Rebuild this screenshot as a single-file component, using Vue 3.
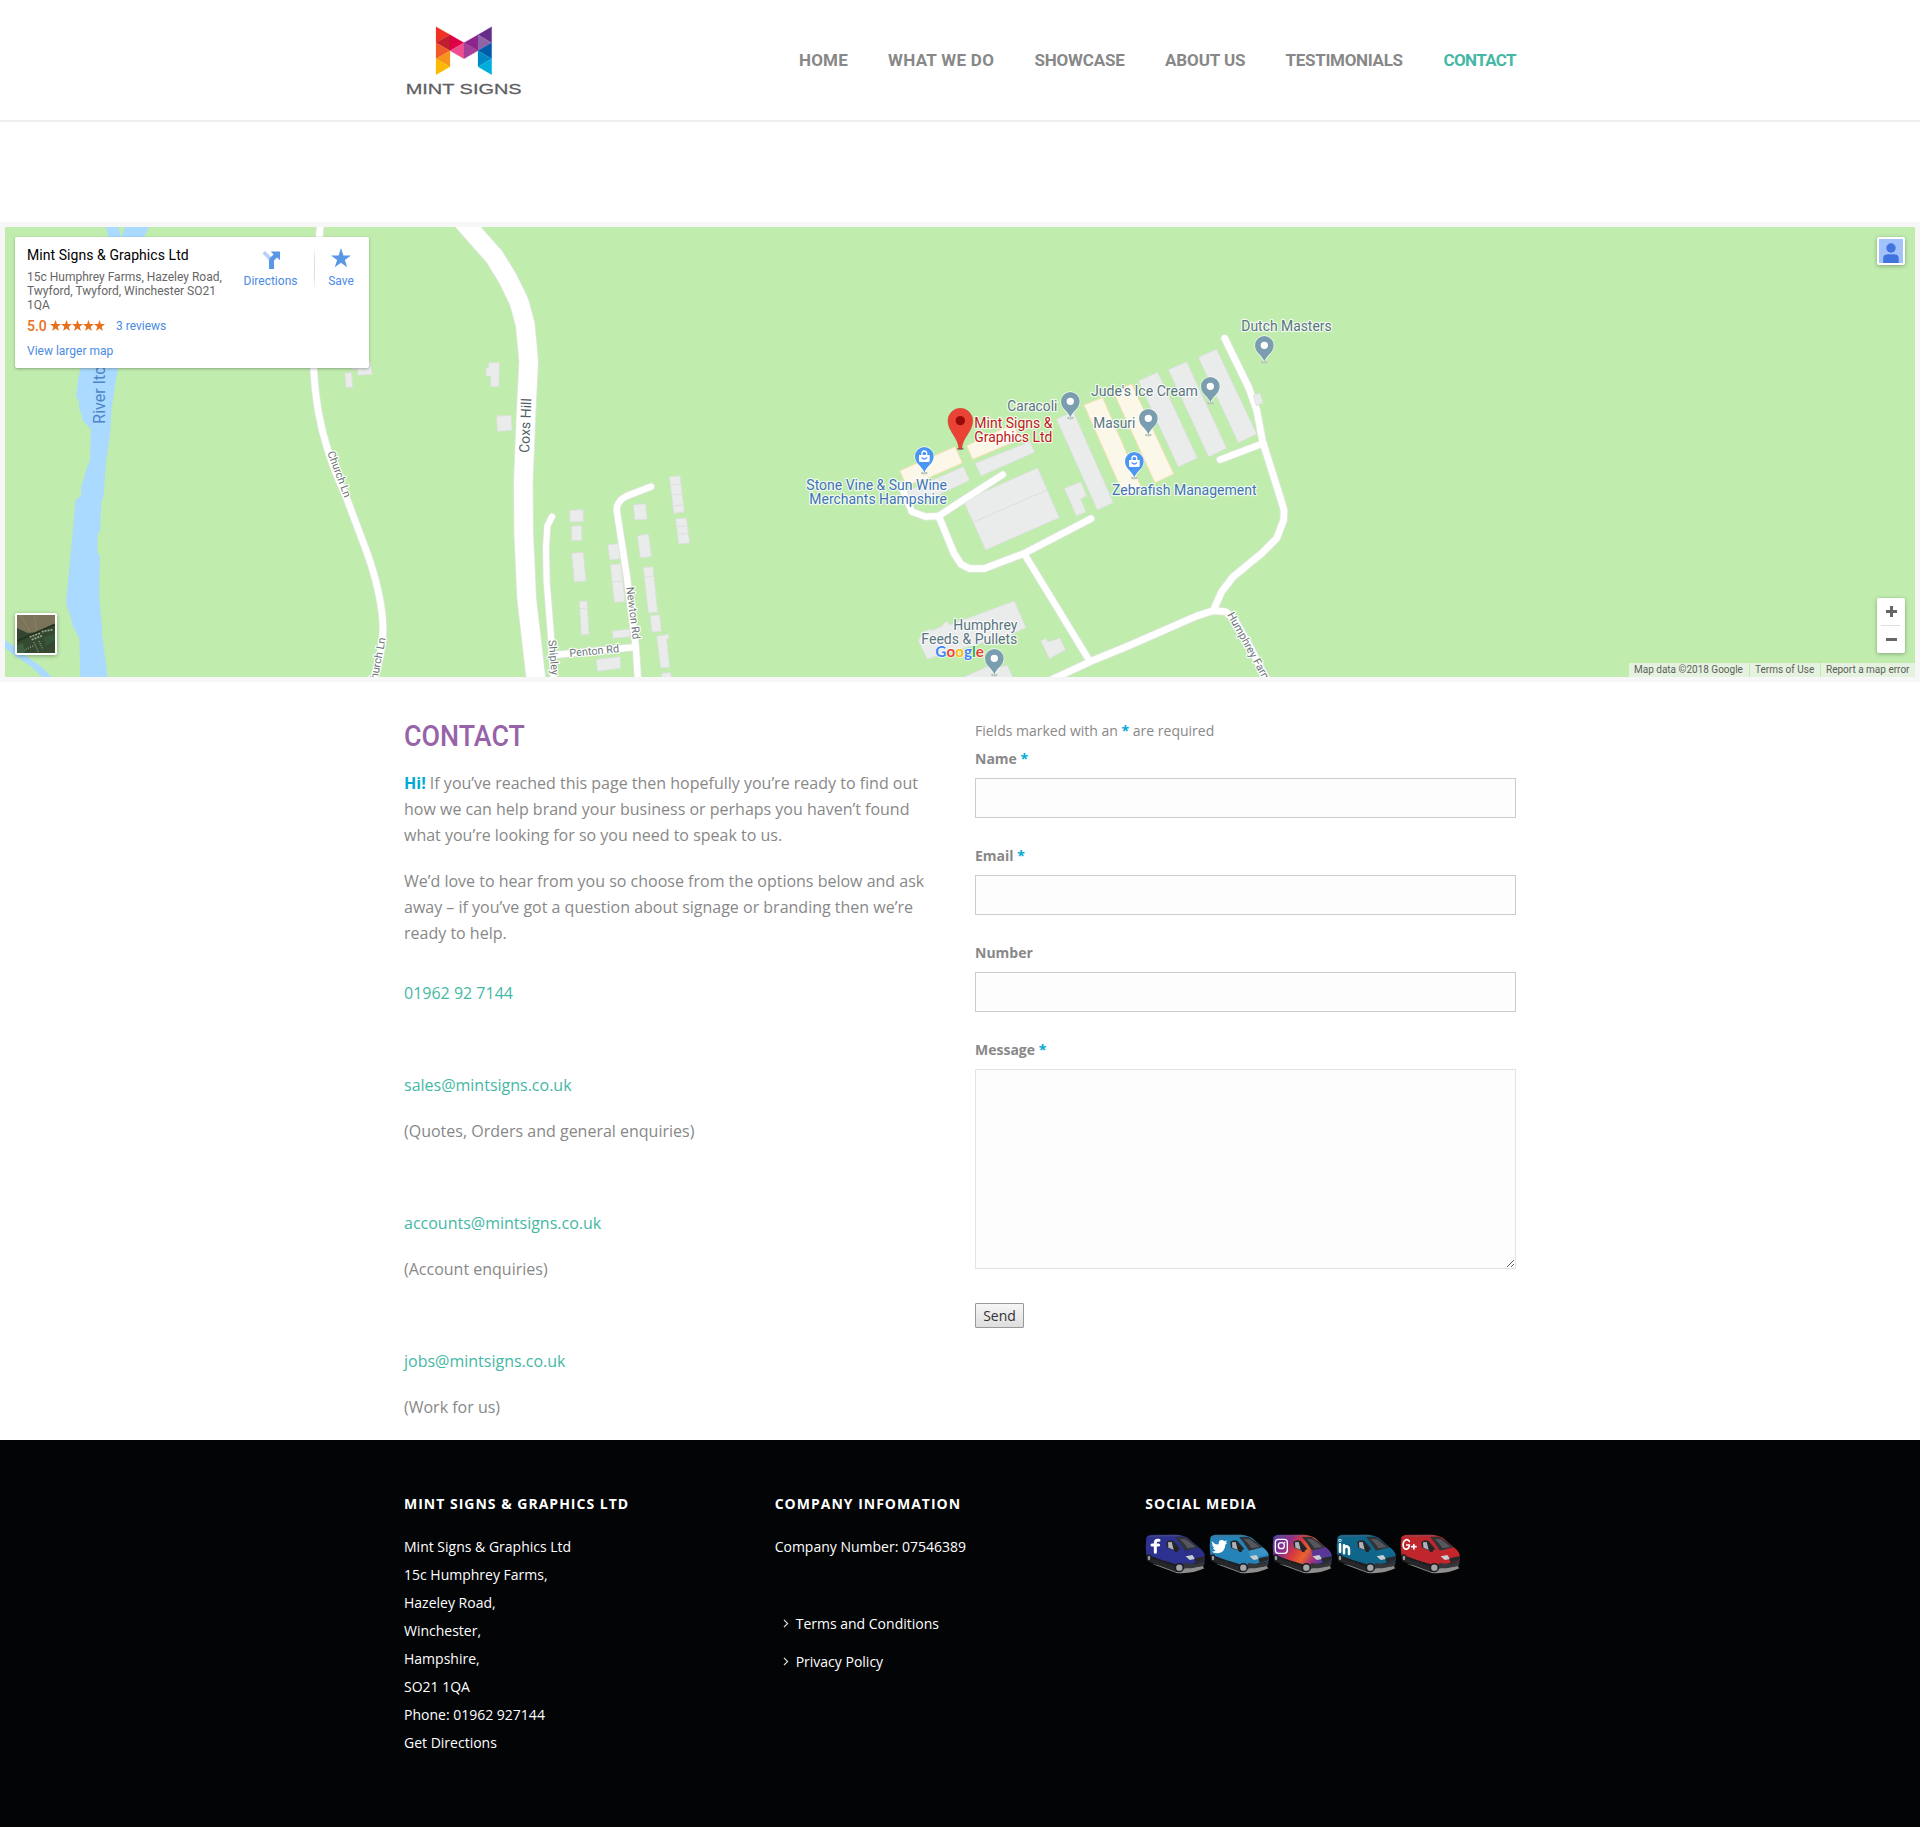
<script setup>
const nav = [
  { label: 'HOME', width: 49, spacing: 0.2 },
  { label: 'WHAT WE DO', width: 106.5, spacing: 0.3 },
  { label: 'SHOWCASE', width: 90.5, spacing: -0.2 },
  { label: 'ABOUT US', width: 80.5, spacing: -0.1 },
  { label: 'TESTIMONIALS', width: 118, spacing: -0.3 },
  { label: 'CONTACT', width: 72.5, spacing: -0.65, active: true }
]

const logo = [
  ['138,80 180,104 138,128', '#ee3124'],
  ['138,128 180,104 180,152', '#be1e2d'],
  ['138,128 180,152 138,176', '#f15a29'],
  ['138,176 180,152 180,200', '#f7941d'],
  ['138,176 180,200 138,224', '#fdb900'],
  ['180,104 222,128 180,152', '#dc0044'],
  ['180,152 222,128 222,176', '#ef4f90'],
  ['222,128 264,152 222,176', '#a63f97'],
  ['222,128 264,104 264,152', '#8c268f'],
  ['264,104 305,80 305,128', '#652d89'],
  ['264,104 305,128 264,152', '#9164a8'],
  ['264,152 305,128 305,176', '#005baa'],
  ['264,152 305,176 264,200', '#0089c4'],
  ['264,200 305,176 305,224', '#00aedb']
]

const westRoads = [
  { d: 'M962 20L955 100Q935 330 941 460Q946 590 985 710Q1000 760 1040 850L1100 1010Q1125 1080 1137 1140Q1152 1215 1148 1260Q1144 1330 1118 1400', w: 20 },
  { d: 'M1370 -4L1399 30L1483 125L1523 190L1557 260L1576 330L1586 440L1578 600L1570 800L1571 950L1580 1150L1610 1410', w: 56 },
  { d: 'M1656 905L1642 933L1638 1000L1640 1100L1655 1290L1661 1400', w: 18 },
  { d: 'M1660 1320L1705 1316L1900 1297', w: 19 },
  { d: 'M1953 815L1880 843Q1850 858 1850 885L1880 1080L1908 1300L1914 1400', w: 19 }
]
const eastRoads = [
  { d: 'M366 560L378 595L396 635L437 650L476 648L540 606L668 524', w: 19 },
  { d: 'M476 648L522 760L543 793L570 806L612 806L733 760L933 656', w: 20 },
  { d: 'M733 762L930 1085', w: 19 },
  { d: 'M800 1146L930 1085L1040 1040L1250 948L1300 932L1336 935L1362 956L1410 1040L1465 1150', w: 20 },
  { d: 'M1334 115L1405 260L1430 330L1448 425L1500 590L1512 630L1511 660L1490 715L1445 760L1360 830L1325 875L1300 932', w: 20 },
  { d: 'M1320 479L1450 430', w: 19 }
]

const westBuildings = [
  '1056,440 1110,440 1117,478 1073,481 1073,463 1056,463',
  '1035,474 1055,473 1058,517 1038,518',
  '1466,443 1498,443 1497,515 1472,515 1472,483 1457,483 1459,457 1466,457',
  '1490,603 1534,601 1536,646 1492,649',
  '1709,886 1750,884 1750,920 1710,921',
  '1714,934 1745,932 1746,976 1715,977',
  '1715,1015 1750,1012 1758,1098 1723,1101',
  '1738,1159 1761,1158 1767,1258 1744,1260',
  '1900,869 1937,866 1941,913 1904,915',
  '1912,962 1946,957 1954,1025 1921,1029',
  '1823,990 1855,985 1861,1031 1829,1035',
  '1831,1049 1863,1046 1875,1160 1843,1162',
  '1930,1058 1959,1055 1973,1192 1945,1194',
  '1950,1202 1979,1199 1984,1249 1956,1251',
  '1970,1264 2006,1258 2007,1270 2000,1272 2009,1357 1982,1359',
  '1985,1375 2012,1372 2014,1390 1986,1390',
  '1837,1248 1890,1242 1890,1265 1839,1270',
  '1789,1333 1860,1325 1862,1360 1792,1369',
  '2008,785 2040,782 2053,891 2021,895',
  '2027,912 2059,908 2069,984 2036,987'
]
const westSeams =
  'M2011 810L2042 807M2014 840L2046 837M2018 873L2050 870M2030 935L2062 932M2033 958L2066 955M1837 1101L1869 1098M1932 1086L1961 1083M1740 1181L1762 1179'

const eastBuildings = [
  '378,575 550,500 569,541 480,583 400,605',
  '585,490 750,425 764,457 603,528',
  '550,602 773,504 838,653 617,750',
  '853,565 903,545 920,588 902,597 918,635 889,648',
  '829,357 880,335 1000,608 952,630',
  '1075,243 1133,217 1252,474 1195,501',
  '1165,209 1220,185 1340,445 1286,471',
  '1255,172 1310,148 1430,402 1375,428',
  '415,1022 425,1002 450,986 456,992 488,977 490,968 503,965 508,975 703,903 738,983 690,1005 470,1068 442,1078',
  '782,1022 798,1015 804,1026 840,1014 857,1050 808,1076',
  '540,1136 640,1092 655,1104 682,1095 700,1136'
]
const shops = [
  '360,512 525,440 547,489 430,540 378,556',
  '560,437 700,372 720,418 578,478',
  '912,315 968,293 1085,565 1034,590',
  '1000,275 1055,252 1181,522 1125,548'
]

const grayPins = [[871, 304], [1291, 259], [1105, 355], [1453, 136], [643, 1075]]
const bluePins = [[433, 469], [1063, 484]]

const labels = [
  { t: 'Dutch Masters', x: 1384, y: 94, w: 271, c: 'poi' },
  { t: "Jude's Ice Cream", x: 933, y: 289, w: 321, c: 'poi' },
  { t: 'Caracoli', x: 682, y: 334, w: 150, c: 'poi' },
  { t: 'Masuri', x: 940, y: 385, w: 126, c: 'poi' },
  { t: 'Mint Signs &', x: 583, y: 384, w: 234, c: 'place' },
  { t: 'Graphics Ltd', x: 583, y: 427, w: 234, c: 'place' },
  { t: 'Stone Vine & Sun Wine', x: 79, y: 571, w: 422, c: 'shop' },
  { t: 'Merchants Hampshire', x: 88, y: 613, w: 413, c: 'shop' },
  { t: 'Zebrafish Management', x: 996, y: 586, w: 434, c: 'shop' },
  { t: 'Humphrey', x: 520, y: 991, w: 192, c: 'poi' },
  { t: 'Feeds & Pullets', x: 424, y: 1033, w: 288, c: 'poi' }
]

const fields = [
  { label: 'Name', required: true },
  { label: 'Email', required: true },
  { label: 'Number', required: false }
]

const contacts = [
  { mail: 'sales@mintsigns.co.uk', note: '(Quotes, Orders and general enquiries)' },
  { mail: 'accounts@mintsigns.co.uk', note: '(Account enquiries)' },
  { mail: 'jobs@mintsigns.co.uk', note: '(Work for us)' }
]

const address = [
  'Mint Signs & Graphics Ltd', '15c Humphrey Farms,', 'Hazeley Road,', 'Winchester,',
  'Hampshire,', 'SO21 1QA', 'Phone: 01962 927144', 'Get Directions'
]

const vans = [
  { id: 'facebook', body: '#2d3190', hood: '#2b2f86' },
  { id: 'twitter', body: '#2583b8', hood: '#3a94c8' },
  { id: 'instagram', body: 'url(#insta)', hood: '#5a3796' },
  { id: 'linkedin', body: '#10658a', hood: '#11698f' },
  { id: 'google', body: '#c0272d', hood: '#c4262c' }
]
</script>

<template>
  <div class="page">
    <header class="header">
      <div class="container header-row">
        <svg class="logo" width="120" height="80" viewBox="42 60 360 240" role="img" aria-label="Mint Signs">
          <polygon v-for="(t, i) in logo" :key="i" :points="t[0]" :fill="t[1]" :stroke="t[1]" stroke-width=".6" />
          <text x="47" y="281" class="logo-text" textLength="348" lengthAdjust="spacingAndGlyphs">MINT SIGNS</text>
        </svg>
        <nav class="nav">
          <a
            v-for="n in nav"
            :key="n.label"
            :class="{ active: n.active }"
            :style="{ width: n.width + 'px', letterSpacing: n.spacing + 'px' }"
          >{{ n.label }}</a>
        </nav>
      </div>
    </header>

    <section class="map">
      <svg class="map-art" width="1910" height="450" viewBox="5 227 1910 450">
        <g transform="translate(0 215) scale(.333333)">
          <path
            class="water"
            d="M316 30H355L362 70L378 30H450L432 66L354 460L341 540L334 590L332 640L326 690L318 740L310 850L304 860L301 945L293 960L292 1010L300 1025L297 1140L306 1235V1255L323 1390H241L238 1270L217 1230L214 1213L198 1165L227 855L243 842V820L258 765L270 735L273 643L247 615L245 600L238 582L236 555L228 545L235 490L242 460L330 80Z"
          />
          <path class="water" d="M10 1272L40 1292L70 1318L125 1356L160 1390H130L95 1356L50 1325L10 1295Z" />
          <polygon v-for="b in westBuildings" :key="b" :points="b" class="building" />
          <path :d="westSeams" class="seam" />
          <path v-for="r in westRoads" :key="'c' + r.d" :d="r.d" class="casing" :stroke-width="r.w + 5" />
          <path v-for="r in westRoads" :key="r.d" :d="r.d" class="road" :stroke-width="r.w" />
          <text class="river" transform="translate(316 626) rotate(-90)">River Itchen</text>
          <text class="street" transform="translate(982 713) rotate(69.5)" textLength="146">Church Ln</text>
          <text class="street" transform="translate(1157 1270) rotate(-79)" text-anchor="end">Church Ln</text>
          <text class="street big" transform="translate(1587 714) rotate(-87.5)" textLength="164">Coxs Hill</text>
          <text class="street" transform="translate(1645 1276) rotate(85)" textLength="106">Shipley</text>
          <text class="street" transform="translate(1709 1326) rotate(-5.5)" textLength="150">Penton Rd</text>
          <text class="street" transform="translate(1879 1117) rotate(83)" textLength="158">Newton Rd</text>
        </g>
        <g transform="translate(780 300) scale(.333333)">
          <polygon v-for="b in eastBuildings" :key="b" :points="b" class="building" />
          <path d="M581 666L801 570" class="seam" />
          <polygon v-for="b in shops" :key="b" :points="b" class="shop-block" />
          <path v-for="r in eastRoads" :key="'c' + r.d" :d="r.d" class="casing" :stroke-width="r.w + 5" />
          <path v-for="r in eastRoads" :key="r.d" :d="r.d" class="road" :stroke-width="r.w" />
          <polygon points="1420,287 1440,279 1449,308 1429,317" class="building" />
          <text class="street" transform="translate(1341 944) rotate(61)">Humphrey Farms</text>
          <g v-for="p in grayPins" :key="p.join()" :transform="`translate(${p[0]} ${p[1]})`">
            <ellipse cy="50" rx="10" ry="4" class="pin-shadow" />
            <path class="pin gray" d="M0 50C-3 32 -28 24 -28 0A28 28 0 0 1 28 0C28 24 3 32 0 50Z" />
            <circle r="11" fill="#fff" />
          </g>
          <g v-for="p in bluePins" :key="p.join()" :transform="`translate(${p[0]} ${p[1]})`">
            <ellipse cy="50" rx="10" ry="4" class="pin-shadow" />
            <path class="pin blue" d="M0 50C-3 32 -28 24 -28 0A28 28 0 0 1 28 0C28 24 3 32 0 50Z" />
            <path d="M-16 -4H16V13Q16 17 12 17H-12Q-16 17 -16 13Z" fill="#fff" />
            <path d="M-7 -4V-9A7 7 0 0 1 7 -9V-4" fill="none" stroke="#fff" stroke-width="4" />
            <path d="M-8 3Q0 13 8 3" fill="none" stroke="#4b96f3" stroke-width="4" />
          </g>
          <g transform="translate(541 362)">
            <ellipse cy="84" rx="10" ry="3" fill="#6b7b6b" />
            <path
              d="M-4 85C-5 52 -37 32 -37 0A37 37 0 0 1 37 0C37 32 5 52 4 85Z"
              fill="#ea4335"
              stroke="#c5372c"
              stroke-width="1.5"
            />
            <circle r="14" fill="#960a0a" />
          </g>
          <text
            v-for="l in labels"
            :key="l.t"
            :x="l.x"
            :y="l.y"
            :textLength="l.w"
            lengthAdjust="spacingAndGlyphs"
            class="label"
            :class="l.c"
          >{{ l.t }}</text>
          <text x="466" y="1070" class="google" textLength="146" lengthAdjust="spacingAndGlyphs">
            <tspan fill="#4285f4">G</tspan><tspan fill="#ea4335">o</tspan><tspan fill="#fbbc05">o</tspan><tspan fill="#4285f4">g</tspan><tspan fill="#34a853">l</tspan><tspan fill="#ea4335">e</tspan>
          </text>
        </g>
      </svg>

      <div class="card">
        <div class="card-info">
          <div class="card-title">Mint Signs &amp; Graphics Ltd</div>
          <div class="card-address">15c Humphrey Farms, Hazeley Road,<br />Twyford, Twyford, Winchester SO21<br />1QA</div>
          <div class="card-rating">
            <b>5.0</b>
            <svg width="55" height="12" viewBox="0 0 55 12">
              <path
                v-for="i in 5"
                :key="i"
                :transform="`translate(${(i - 1) * 11} 0)`"
                fill="#e7711b"
                d="M5.5 0L6.9 4.1H11L7.7 6.7L8.9 11L5.5 8.4L2.1 11L3.3 6.7L0 4.1H4.1Z"
              />
            </svg>
            <a>3 reviews</a>
          </div>
          <a class="card-larger">View larger map</a>
        </div>
        <div class="card-action directions">
          <svg width="20" height="20" viewBox="0 0 20 20">
            <path d="M1.5 3.2L4 .9L10.5 7.5L8 10.5Z" fill="#b5d1f5" />
            <path d="M8 19V11Q8 9 9.4 7.6L12.6 4.4L9.8 1.5H19V10.3L16 7.4L13 10.4V19Z" fill="#5a97e6" />
          </svg>
          <a>Directions</a>
        </div>
        <div class="card-divider"></div>
        <div class="card-action save">
          <svg width="20" height="20" viewBox="0 0 20 20">
            <path d="M10 0L12.4 7.4H20L13.9 12L16.2 19.3L10 14.8L3.8 19.3L6.1 12L0 7.4H7.6Z" fill="#5a97e6" />
          </svg>
          <a>Save</a>
        </div>
      </div>

      <div class="satellite">
        <svg width="38" height="38" viewBox="0 0 114 114">
          <rect width="114" height="114" fill="#34492f" />
          <path d="M0 0H114V30L60 52L32 54L0 40Z" fill="#7b745a" />
          <path d="M0 40L32 56L0 76Z" fill="#33452f" />
          <path d="M114 28L0 78" stroke="#24351f" stroke-width="6" />
          <path d="M10 0L40 50M52 0L58 46" stroke="#918769" stroke-width="2" />
          <path d="M38 66L72 54M44 74L76 62M74 50L108 44" stroke="#9aa596" stroke-width="5" stroke-dasharray="6 3" />
          <path d="M20 106L50 92M50 82L64 110M66 78L78 104" stroke="#7f9080" stroke-width="5" stroke-dasharray="3 4" />
          <path d="M0 92L18 84L24 114H0Z" fill="#3f6140" />
          <path d="M80 66L114 56V76L86 92Z" fill="#37573a" />
        </svg>
      </div>

      <div class="user">
        <svg width="24" height="24" viewBox="0 0 24 24">
          <rect width="24" height="24" fill="#a1c2fa" />
          <circle cx="12" cy="9" r="4.7" fill="#4174df" />
          <path d="M4.2 24V19Q4.2 15.5 9 15.2H15Q19.7 15.5 19.7 19V24Z" fill="#4174df" />
        </svg>
      </div>

      <div class="zoom">
        <svg width="28" height="27" viewBox="0 0 28 27">
          <path d="M9 13.5H20M14.5 8V19" stroke="#666" stroke-width="3" />
        </svg>
        <i></i>
        <svg width="28" height="27" viewBox="0 0 28 27">
          <path d="M9 13.5H20" stroke="#666" stroke-width="3" />
        </svg>
      </div>

      <div class="credits">
        <span class="c1">Map data ©2018 Google</span>
        <span class="c2">Terms of Use</span>
        <span class="c3">Report a map error</span>
      </div>
    </section>

    <main class="container main">
      <div class="intro">
        <h2>CONTACT</h2>
        <p><strong>Hi!</strong> If you’ve reached this page then hopefully you’re ready to find out<br />how we can help brand your business or perhaps you haven’t found<br />what you’re looking for so you need to speak to us.</p>
        <p>We’d love to hear from you so choose from the options below and ask<br />away – if you’ve got a question about signage or branding then we’re<br />ready to help.</p>
        <p class="phone"><a>01962 92 7144</a></p>
        <template v-for="c in contacts" :key="c.mail">
          <p>&nbsp;</p>
          <p><a>{{ c.mail }}</a></p>
          <p>{{ c.note }}</p>
        </template>
      </div>

      <form class="form" @submit.prevent>
        <div class="form-note">Fields marked with an <em>*</em> are required</div>
        <div v-for="f in fields" :key="f.label" class="field">
          <label>{{ f.label }} <em v-if="f.required">*</em></label>
          <input type="text" />
        </div>
        <div class="field message">
          <label>Message <em>*</em></label>
          <textarea></textarea>
        </div>
        <button type="button">Send</button>
      </form>
    </main>

    <footer class="footer">
      <div class="container footer-row">
        <div class="footer-col">
          <h4>MINT SIGNS &amp; GRAPHICS LTD</h4>
          <div v-for="a in address" :key="a" class="line">{{ a }}</div>
        </div>
        <div class="footer-col">
          <h4>COMPANY INFOMATION</h4>
          <div class="line">Company Number: 07546389</div>
          <ul>
            <li v-for="l in ['Terms and Conditions', 'Privacy Policy']" :key="l">
              <svg width="6" height="9" viewBox="0 0 6 9"><path d="M1 .8L4.6 4.5L1 8.2" fill="none" stroke="#ddd" stroke-width="1.2" /></svg>
              <a>{{ l }}</a>
            </li>
          </ul>
        </div>
        <div class="footer-col">
          <h4>SOCIAL MEDIA</h4>
          <div class="vans">
            <svg v-for="v in vans" :key="v.id" width="61" height="43" viewBox="0 0 183 129">
              <defs v-if="v.id === 'instagram'">
                <linearGradient id="insta" x1="0" y1="0" x2="1" y2=".35">
                  <stop offset="0" stop-color="#4b3fa0" />
                  <stop offset=".3" stop-color="#8c2f8f" />
                  <stop offset=".5" stop-color="#d93a3c" />
                  <stop offset=".68" stop-color="#e8622c" />
                  <stop offset=".85" stop-color="#a5307f" />
                  <stop offset="1" stop-color="#4b3fa0" />
                </linearGradient>
              </defs>
              <path d="M20 92L95 120Q140 124 178 106L172 98L100 108Z" fill="#8e8e8e" />
              <path d="M3 68L12 86L96 118L118 106L176 98L180 76L120 84Z" fill="#26272a" />
              <path
                :fill="v.body"
                d="M4 14Q6 6 22 5L96 5Q118 7 130 16L160 42Q174 52 179 64L178 84L140 92L98 100L52 88L4 66Q0 38 4 14Z"
              />
              <path :fill="v.hood" d="M118 54L158 43Q174 50 178 64L146 72L122 68Z" />
              <path d="M6 12Q20 4 98 5L112 9Z" fill="#667" opacity=".4" />
              <path d="M90 12L118 11Q140 24 160 43L120 53Q106 30 90 12Z" fill="#303338" />
              <path d="M104 18L122 19Q140 32 152 42L128 46Q118 30 104 18Z" fill="#55575c" />
              <path d="M64 26Q76 18 86 24L106 48L94 55L66 44Z" fill="#26282c" />
              <path d="M69 28L80 27L86 50L70 44Z" fill="#b0b2b8" />
              <path d="M86 42L98 44L98 58L90 56Z" fill="#202225" />
              <path d="M4 68L50 84L92 97" stroke="#1d1e22" stroke-width="7" fill="none" />
              <path d="M122 70L142 66L150 78L134 81Z" fill="#c8cdd0" />
              <path d="M148 76L178 70L179 82L152 90Z" fill="#27282c" />
              <path d="M118 90L150 94L179 86L177 98L140 106L112 106Z" fill="#35363a" />
              <circle cx="103" cy="104" r="14" fill="#1c1d1f" />
              <circle cx="103" cy="104" r="9.5" fill="#a5a7aa" />
              <ellipse cx="12" cy="75" rx="7" ry="11" fill="#1c1d1f" />
              <ellipse cx="12" cy="75" rx="4" ry="7" fill="#98999c" />
              <path v-if="v.id === 'facebook'" class="mark-line" stroke-width="9" d="M42 22H38Q31 22 31 30V58M21 36H41" />
              <path
                v-else-if="v.id === 'twitter'"
                fill="#fff"
                d="M8 24Q18 36 29 34Q28 21 38 21Q43 21 46 25L54 22L50 29L55 29L49 35Q48 58 26 61Q15 61 9 56Q17 56 20 52Q13 50 12 45L16 44Q9 40 9 34L13 35Q7 30 8 24Z"
              />
              <g v-else-if="v.id === 'instagram'" class="mark-line" stroke-width="4">
                <rect x="10" y="19" width="36" height="42" rx="9" />
                <circle cx="28" cy="38" r="9" />
                <path d="M38 28V29" />
              </g>
              <g v-else-if="v.id === 'linkedin'" class="mark-line" stroke-width="7.5">
                <path d="M12 34V56M24 61V37M24 48Q26 39 33 40Q39 42 39 50V63" />
                <circle cx="12" cy="22" r="1.2" />
              </g>
              <g v-else class="mark-line" stroke-width="5">
                <path d="M28 25Q22 17 15 22Q7 29 10 41Q14 52 23 47Q28 44 28 36H20M35 41H48M41.5 35V48" />
              </g>
            </svg>
          </div>
        </div>
      </div>
    </footer>
  </div>
</template>

<style>
body {
  margin: 0;
  background: #fff;
}
</style>

<style scoped>
.page {
  height: 1827px;
  overflow: hidden;
  display: flex;
  flex-direction: column;
  font-family: 'Open Sans', 'Noto Sans', sans-serif;
  color: #888;
}
.container {
  width: 1112px;
  margin: 0 auto;
}
.header {
  height: 120px;
  border-bottom: 2px solid #eee;
  margin-bottom: 100px;
}
.header-row {
  height: 120px;
  display: flex;
  justify-content: space-between;
  align-items: center;
}
.logo-text {
  font: 45px 'Liberation Sans', Arial, sans-serif;
  fill: #5f6062;
  stroke: #5f6062;
  stroke-width: 0.8;
}
.nav {
  display: flex;
  gap: 40px;
  padding-bottom: 1px;
}
.nav a {
  font: 700 17px/24px Roboto, sans-serif;
  color: #888;
  white-space: nowrap;
}
.nav .active {
  color: #45b8a5;
}

.map {
  position: relative;
  box-sizing: border-box;
  height: 460px;
  border: 5px solid #f7f7f7;
  background: #c0ecae;
  font-family: Roboto, sans-serif;
}
.map-art {
  display: block;
}
.water {
  fill: #aadaff;
}
.building {
  fill: #e9ecea;
  stroke: #dcdfdc;
  stroke-width: 2.5;
}
.seam {
  fill: none;
  stroke: #dadcda;
  stroke-width: 2.5;
}
.shop-block {
  fill: #fcf8e9;
  stroke: #fbdfb8;
  stroke-width: 3;
}
.casing,
.road {
  fill: none;
  stroke: #dfe5dc;
  stroke-linecap: round;
  stroke-linejoin: round;
}
.road {
  stroke: #fff;
}
.map-art text {
  font-family: Roboto, sans-serif;
}
.river {
  font-size: 48px;
  fill: #4d84c8;
}
.street {
  font-size: 33px;
  fill: #6c7678;
  stroke: #fff;
  stroke-width: 7;
  paint-order: stroke;
  stroke-linejoin: round;
}
.street.big {
  font-size: 42px;
  fill: #4f6167;
}
.label {
  font-size: 42px;
  stroke: rgba(255, 255, 255, 0.8);
  stroke-width: 7;
  stroke-linejoin: round;
  paint-order: stroke;
}
.poi {
  fill: #597580;
}
.shop {
  fill: #3f74b5;
}
.place {
  fill: #bf1a16;
}
.pin {
  stroke: rgba(255, 255, 255, 0.85);
  stroke-width: 4;
  paint-order: stroke;
}
.pin.gray {
  fill: #7a9eaf;
}
.pin.blue {
  fill: #4b96f3;
}
.pin-shadow {
  fill: #b8c4b8;
}
.map-art .google {
  font-family: Lato, sans-serif;
  font-weight: 700;
  font-size: 46px;
  stroke: rgba(255, 255, 255, 0.8);
  stroke-width: 5;
  paint-order: stroke;
}

.card {
  position: absolute;
  left: 10px;
  top: 10px;
  width: 354px;
  height: 131px;
  box-sizing: border-box;
  padding: 10px 15px 0 12px;
  display: flex;
  background: #fff;
  border-radius: 2px;
  box-shadow: 0 1px 3px rgba(0, 0, 0, 0.3);
  font-size: 12px;
  color: #666;
}
.card a {
  color: #4b8ae3;
}
.card-info {
  width: 217px;
  white-space: nowrap;
}
.card-title {
  font-size: 14px;
  line-height: 16px;
  letter-spacing: 0.06px;
  color: #000;
}
.card-address {
  margin-top: 7px;
  line-height: 14px;
}
.card-rating {
  display: flex;
  align-items: center;
  margin-top: 6px;
  height: 16px;
}
.card-rating b {
  width: 23px;
  font-size: 14px;
  font-weight: 500;
  color: #e7711b;
}
.card-rating svg {
  margin-top: -1px;
}
.card-rating a {
  margin-left: 11px;
}
.card-larger {
  display: block;
  margin-top: 9px;
  line-height: 16px;
}
.card-action {
  display: flex;
  flex-direction: column;
  align-items: center;
  line-height: 14px;
}
.card-action svg {
  margin-bottom: 6px;
}
.directions {
  width: 53px;
  padding-top: 3px;
}
.directions svg {
  margin-bottom: 4px;
}
.save {
  width: 26px;
  padding-top: 1px;
}
.card-divider {
  width: 1px;
  height: 43px;
  margin: 0 13px 0 17px;
  background: linear-gradient(#fff, #ddd 30%, #ddd 70%, #fff);
}
.satellite,
.user,
.zoom {
  position: absolute;
  background: #fff;
  border-radius: 2px;
  box-shadow: 0 1px 4px rgba(0, 0, 0, 0.3);
}
.satellite {
  left: 10px;
  top: 386px;
  padding: 2px;
}
.satellite svg,
.user svg,
.zoom svg {
  display: block;
}
.user {
  right: 10px;
  top: 10px;
  padding: 2px;
}
.zoom {
  right: 10px;
  top: 371px;
  width: 28px;
}
.zoom i {
  display: block;
  height: 1px;
  margin: 0 5px 0 4px;
  background: #e0e0e0;
}
.credits {
  position: absolute;
  right: 0;
  bottom: 0;
  display: flex;
  gap: 1px;
  font-size: 10px;
  line-height: 14px;
  color: #5c5f5a;
  white-space: nowrap;
}
.credits span {
  box-sizing: border-box;
  padding-left: 5px;
  background: rgba(245, 245, 245, 0.7);
}
.c1 {
  width: 120px;
}
.c2 {
  width: 70px;
}
.c3 {
  width: 94px;
}

.main {
  display: flex;
  height: 758px;
}
.intro {
  width: 571px;
  font-size: 16px;
  line-height: 26px;
}
h2 {
  margin: 35px 0 16px;
  font: 500 30px/37px Roboto, sans-serif;
  color: #9763a8;
  transform: scaleX(0.895);
  transform-origin: left;
}
.intro p {
  margin: 0 0 20px;
  white-space: nowrap;
}
.intro .phone {
  margin-top: 34px;
}
.intro strong {
  color: #00aad4;
}
.intro a {
  color: #45b8a5;
}
.form {
  width: 541px;
  padding-top: 35px;
  font-size: 14px;
}
em {
  font-style: normal;
  font-weight: 700;
  color: #00aad4;
}
.form-note {
  line-height: 28px;
}
.field {
  margin-bottom: 24px;
}
.field.message {
  margin-bottom: 34px;
}
.field label {
  display: block;
  margin-bottom: 5px;
  line-height: 28px;
  font-weight: 700;
}
input,
textarea {
  display: block;
  box-sizing: border-box;
  width: 541px;
  height: 40px;
  margin: 0;
  border: 1px solid #ccc;
  border-radius: 0;
  background: #fdfdfd;
}
textarea {
  height: 200px;
  border-color: #e3e3e3;
}
button {
  display: block;
  width: 49px;
  height: 25px;
  padding: 0;
  border: 1px solid #999;
  border-radius: 1px;
  background: linear-gradient(#f6f6f6, #dedede);
  font: 14px/22px 'Open Sans', sans-serif;
  color: #333;
}

.footer {
  flex: 1;
  background: #020406;
  color: #fff;
  font-size: 14px;
}
.footer-row {
  display: flex;
  padding-top: 54px;
}
.footer-col {
  width: 371px;
}
h4 {
  margin: 0 0 19px;
  font-size: 14px;
  line-height: 20px;
  letter-spacing: 1px;
}
.line {
  height: 28px;
  line-height: 28px;
}
ul {
  margin: 43px 0 0;
  padding: 0 0 0 8px;
  list-style: none;
}
li {
  display: flex;
  align-items: center;
  gap: 7px;
  height: 38px;
}
.vans {
  display: flex;
  gap: 2.7px;
  margin: 1px 0 0 -0.5px;
}
.mark-line {
  fill: none;
  stroke: #fff;
  stroke-linecap: round;
}
</style>
